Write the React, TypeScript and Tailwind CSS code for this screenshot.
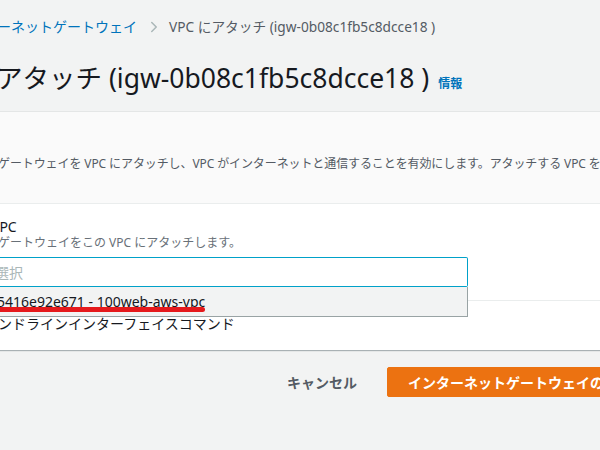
import { ChevronRight } from 'lucide-react';

const font = { fontFamily: '"Noto Sans", "Noto Sans CJK JP", sans-serif' };

export default function App() {
  return (
    <div
      className="relative h-[450px] w-[600px] overflow-hidden bg-[#f2f3f3] text-[#16191f]"
      style={font}
    >
      {/* Breadcrumb */}
      <div className="flex items-center whitespace-nowrap pt-[17px] text-[14px] leading-[20px]">
        <span className="-ml-[3px] text-[#0073bb]">ーネットゲートウェイ</span>
        <ChevronRight className="ml-[8px] mr-[6px] size-[18px] text-[#aab7b8]" strokeWidth={2} />
        <span className="text-[13.7px] text-[#545b64]">VPC にアタッチ (igw-0b08c1fb5c8dcce18 )</span>
      </div>

      {/* Title */}
      <div className="mt-[23px] flex items-baseline whitespace-nowrap">
        <h1 className="-ml-[4px] text-[26.5px] font-normal leading-[36px]">アタッチ (igw-0b08c1fb5c8dcce18 )</h1>
        <span className="ml-[9px] text-[12px] font-bold text-[#0073bb]">情報</span>
      </div>

      {/* Card */}
      <div className="mt-[15px] border-t border-[#e4e6e6] shadow-[0_1px_1px_0_rgba(0,28,36,0.3)]">
        <div className="h-[92px] border-b border-[#eaeded] bg-[#fafafa] pt-[42px]">
          <p className="-ml-[2px] whitespace-nowrap text-[12px] leading-[20px] tracking-[-0.1px] text-[#545b64]">
            ゲートウェイを VPC にアタッチし、VPC がインターネットと通信することを有効にします。アタッチする VPC を以下から選択してください。
          </p>
        </div>

        <div className="bg-white">
          <div className="pt-[14px]">
            <div className="-ml-[9px] text-[14px] leading-[18px]">VPC</div>
            <div className="-ml-[2px] whitespace-nowrap text-[12px] leading-[14px] text-[#687078]">
              ゲートウェイをこの VPC にアタッチします。
            </div>

            <div className="relative mt-[7px] w-[468px]">
              <div className="flex h-[30px] items-center rounded-r-[2px] border-[1.5px] border-l-0 border-[#00a1c9] text-[14px] text-[#aab7b8]">
                <span className="-ml-[5px]">選択</span>
              </div>
              <div className="absolute left-0 top-full z-10 flex h-[30px] w-full items-center border-b-[1.5px] border-r-[1.5px] border-[#99a3a4] bg-[#f2f3f3] text-[14px]">
                <span className="relative -ml-[3px] whitespace-nowrap">
                  5416e92e671 - 100web-aws-vpc
                </span>
                <div className="absolute left-0 top-[20px] h-[5px] w-[205px] rounded-r-full bg-[#e5191c]" />
              </div>
            </div>
          </div>

          <div className="mt-[13px] border-t border-[#eaeded] pb-[16px] pt-[13px]">
            <div className="-ml-[2px] whitespace-nowrap text-[14px] leading-[20px]">
              ンドラインインターフェイスコマンド
            </div>
          </div>
        </div>
      </div>

      {/* Actions */}
      <div className="mt-[17px] flex items-center whitespace-nowrap pl-[287px]">
        <button className="text-[14px] font-bold text-[#545b64]">キャンセル</button>
        <button className="ml-[30px] h-[30px] rounded-[2px] border border-[#ec7211] bg-[#ec7211] px-[20px] text-[14px] font-bold text-white">
          インターネットゲートウェイのアタッチ
        </button>
      </div>
    </div>
  );
}
